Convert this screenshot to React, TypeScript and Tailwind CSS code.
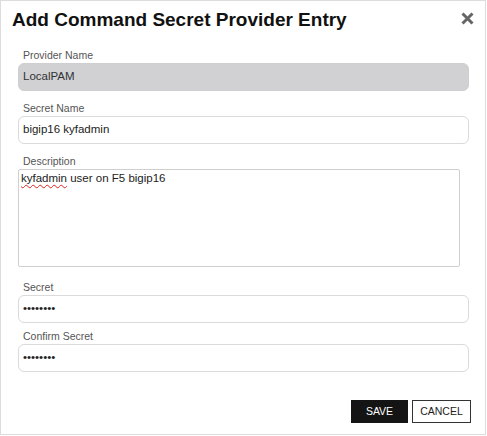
const labelCls = "block h-[14px] pl-[5px] text-[10.5px] leading-[14px] text-[#555]";
const inputCls = "mt-[1px] flex h-[28px] w-[451px] items-center rounded-[6px] border border-[#dadada] bg-white px-[4px] text-[11.5px] text-[#222]";

function Field({ label, value, className }: { label: string; value: string; className?: string }) {
  return (
    <div className={className}>
      <span className={labelCls}>{label}</span>
      <div className={inputCls}>{value}</div>
    </div>
  );
}

export default function App() {
  return (
    <div className="h-[435px] w-[486px] border border-[#dcdcdc] bg-white font-['Liberation_Sans',Arial,sans-serif]">
      <div className="flex items-start justify-between pl-[11px] pr-[11px] pt-[6px]">
        <h2 className="text-[19px] font-bold leading-[26px] text-[#111]">Add Command Secret Provider Entry</h2>
        <svg className="mt-[5px]" width="13" height="13" viewBox="0 0 13 13">
          <path d="M1.5 1.5 L11.5 11.5 M11.5 1.5 L1.5 11.5" stroke="#666" strokeWidth="3" />
        </svg>
      </div>

      <div className="mt-[15px] px-[17px]">
        <div>
          <span className={labelCls}>Provider Name</span>
          <div className="mt-[1px] flex h-[28px] w-[451px] items-center rounded-[6px] border border-[#cfcfd1] bg-[#d1d1d3] px-[4px] text-[11.5px] text-[#333]">
            LocalPAM
          </div>
        </div>

        <Field className="mt-[10px]" label="Secret Name" value="bigip16 kyfadmin" />

        <div className="mt-[10px]">
          <span className={labelCls}>Description</span>
          <div className="mt-[1px] h-[98px] w-[442px] rounded-[2px] border border-[#cfcfcf] bg-white px-[2px] pt-[1px] text-[11.5px] leading-[14px] text-[#222]">
            <span className="underline decoration-[#e02020] decoration-wavy decoration-1 underline-offset-[2px]">kyfadmin</span> user on F5 bigip16
          </div>
        </div>

        <Field className="mt-[13px]" label="Secret" value="••••••••" />
        <Field className="mt-[6px]" label="Confirm Secret" value="••••••••" />
      </div>

      <div className="mt-[28px] flex justify-end gap-[4px] pr-[14px]">
        <button className="h-[23px] w-[57px] bg-[#141414] text-[10.5px] text-white">SAVE</button>
        <button className="h-[23px] w-[59px] border border-[#333] bg-white text-[10.5px] text-[#222]">CANCEL</button>
      </div>
    </div>
  );
}
